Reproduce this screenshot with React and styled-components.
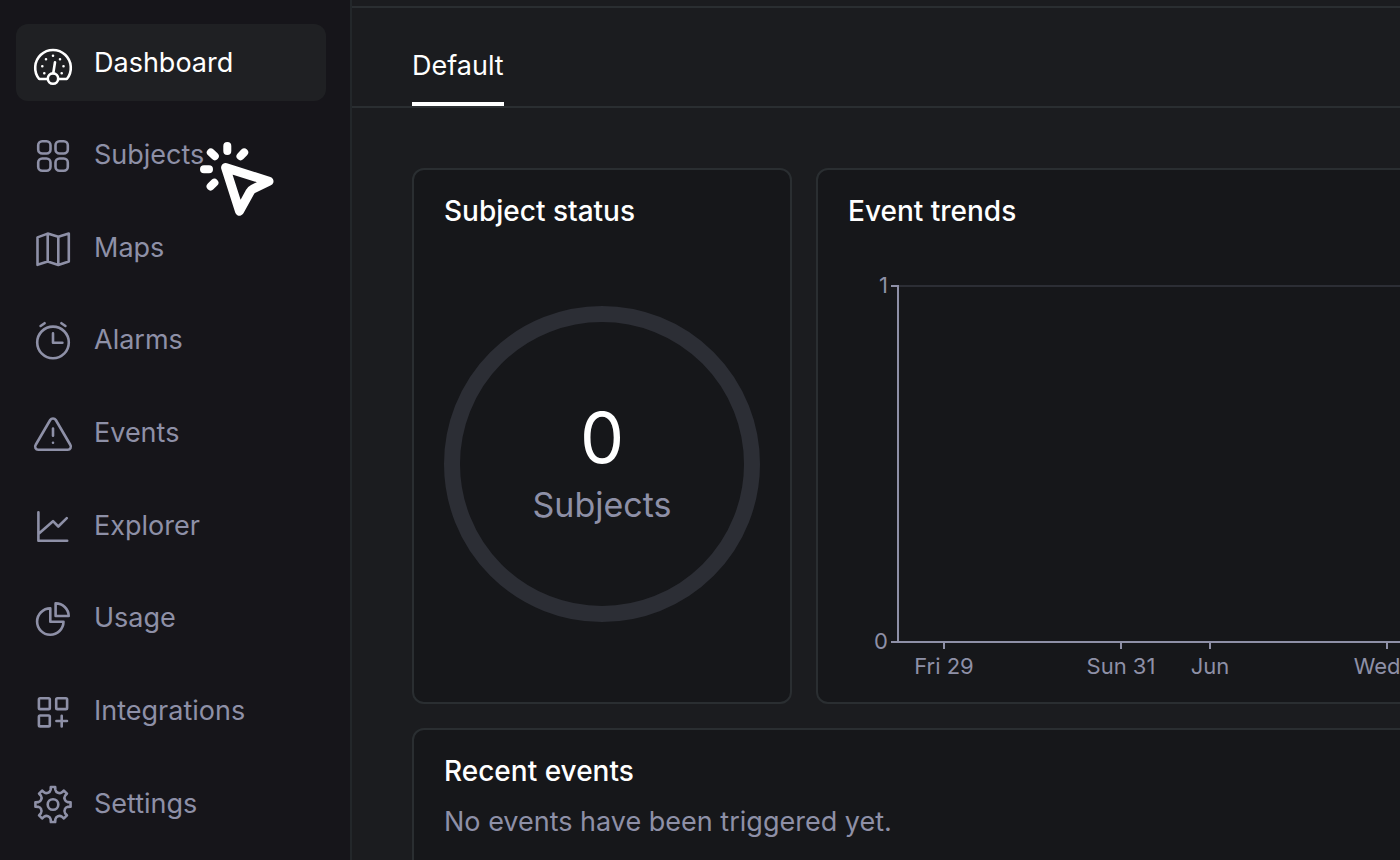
// src/App.jsx
import React, { useState } from 'react';
import styled, { createGlobalStyle } from 'styled-components';

const GlobalStyle = createGlobalStyle`
  * {
    box-sizing: border-box;
  }

  body {
    margin: 0;
    background: #1b1c1f;
    color: #ffffff;
    font-family: Inter, 'Liberation Sans', sans-serif;
    font-size: 27px;
    line-height: 36px;
  }
`;

const Page = styled.div`
  display: flex;
  height: 100vh;
  overflow: hidden;
`;

const Sidebar = styled.aside`
  position: relative;
  flex: none;
  width: 352px;
  background: #16151a;
  border-right: 2px solid #23272a;
`;

const Nav = styled.nav`
  display: flex;
  flex-direction: column;
  justify-content: space-between;
  height: 100%;
  padding: 24px 24px 18px 16px;
`;

const NavLink = styled.a`
  display: flex;
  align-items: center;
  flex: none;
  gap: 21px;
  height: 77px;
  padding: 0 17px;
  border-radius: 12px;
  color: ${(props) => (props.$active ? '#ffffff' : '#8e90a7')};
  background: ${(props) => (props.$active ? '#1f2023' : 'transparent')};
  text-decoration: none;
`;

const Icon = styled.svg`
  flex: none;
  width: 40px;
  height: 40px;
  overflow: visible;
  fill: none;
  stroke: currentColor;
  stroke-width: 2.6;
  stroke-linecap: round;
  stroke-linejoin: round;
`;

const Pointer = styled.svg`
  position: absolute;
  left: 190px;
  top: 130px;
  width: 100px;
  height: 100px;
  fill: none;
  stroke: #ffffff;
  stroke-width: 8;
  stroke-linecap: round;
  stroke-linejoin: round;
  pointer-events: none;
`;

const Main = styled.main`
  flex: 1;
  min-width: 0;
  overflow: hidden;
`;

const TopBar = styled.header`
  height: 8px;
  border-bottom: 2px solid #2a2e31;
`;

const Tabs = styled.div`
  display: flex;
  height: 100px;
  padding: 0 60px;
  border-bottom: 2px solid #2a2e31;
`;

const Tab = styled.button`
  padding: 22px 0 0;
  border: none;
  border-bottom: 4px solid #ffffff;
  background: none;
  color: #ffffff;
  font: inherit;
  cursor: pointer;
`;

const Board = styled.div`
  display: grid;
  grid-template-columns: 380px 1fr;
  gap: 24px;
  width: 150%;
  padding: 60px;
`;

const Card = styled.section`
  grid-column: ${(props) => (props.$wide ? '1 / -1' : 'auto')};
  min-height: ${(props) => (props.$wide ? '240px' : '536px')};
  padding: 23px 30px;
  border: 2px solid #2a2e31;
  border-radius: 12px;
  background: #16171a;
`;

const CardTitle = styled.h2`
  margin: 0;
  font-size: 28px;
  font-weight: 500;
`;

const Empty = styled.p`
  margin: 15px 0 0;
  color: #8e90a7;
`;

const Donut = styled.svg`
  display: block;
  width: 316px;
  height: 316px;
  margin-top: 77px;
  text-anchor: middle;
`;

const DonutValue = styled.text`
  fill: #ffffff;
  font-size: 70px;
`;

const DonutLabel = styled.text`
  fill: #8e90a7;
  font-size: 34px;
`;

const Chart = styled.svg`
  display: block;
  width: 100%;
  height: 412px;
  margin-top: 37px;
  fill: #8e90a7;
  font-size: 22px;
`;

const icons = {
  dashboard: (
    <>
      <path d="M14.5 36H6.2A17.8 17.8 0 1 1 33.8 36H25.5M20.3 30 22 19.2" />
      <circle cx="20" cy="35.6" r="5.2" />
      <path d="M20 12.8h.01M13 16.2h.01M27 16.2h.01M9.3 23.2h.01M30.5 23.2h.01M11.3 30.2h.01M28.7 30.2h.01" />
    </>
  ),
  subjects: (
    <>
      <rect x="5.2" y="6.2" width="12.3" height="12.3" rx="4" />
      <rect x="22.5" y="6.2" width="12.3" height="12.3" rx="4" />
      <rect x="5.2" y="23.5" width="12.3" height="12.3" rx="4" />
      <rect x="22.5" y="23.5" width="12.3" height="12.3" rx="4" />
    </>
  ),
  maps: (
    <path d="M4.5 9.4 14.7 5.6 25.3 8.8 35.8 5.6V33.6L25.3 37 14.7 33.6 4.5 36.8ZM14.7 5.6v28M25.3 8.8V37" />
  ),
  alarms: (
    <>
      <circle cx="20" cy="22.4" r="15.8" />
      <path d="M20 13.4v9.3h9.4M7.6 6l4-2.8M32.4 6l-4-2.8" />
    </>
  ),
  events: (
    <>
      <path d="M5.2 36.8h29.6a3.1 3.1 0 0 0 2.6-4.8L22.8 7a3.3 3.3 0 0 0-5.6 0L2.6 32a3.1 3.1 0 0 0 2.6 4.8Z" />
      <path d="M20 15.6v7.2M20 29.8h.01" />
    </>
  ),
  explorer: <path d="M5.4 6.2v28.6h28.8M5.4 28 20 15.2l5.3 5.3 8.5-8.4" />,
  usage: (
    <>
      <path d="M17.3 10.4A13.2 13.2 0 1 0 30.5 23.8H17.3Z" />
      <path d="M22.6 5.4A12.9 12.9 0 0 1 35.7 18H22.6Z" />
    </>
  ),
  integrations: (
    <>
      <rect x="5.9" y="7.2" width="10.9" height="10.9" rx="1.2" />
      <rect x="23.2" y="7.2" width="10.9" height="10.9" rx="1.2" />
      <rect x="5.9" y="24.5" width="10.9" height="10.9" rx="1.2" />
      <path d="M28.7 24.8v10.6M23.4 30h10.6" />
    </>
  ),
  settings: (
    <>
      <circle cx="20" cy="20.5" r="5.3" />
      <path d={gearPath(20, 20.5)} />
    </>
  )
};

// eight flat teeth with rounded valleys between them
function gearPath(cx, cy) {
  const point = (radius, degrees) => {
    const angle = (degrees * Math.PI) / 180;
    return `${(cx + radius * Math.sin(angle)).toFixed(2)} ${(cy - radius * Math.cos(angle)).toFixed(2)}`;
  };
  let d = '';
  for (let i = 0; i < 8; i += 1) {
    const a = i * 45;
    d += `${i === 0 ? 'M' : 'L'}${point(17.7, a - 7)}L${point(17.7, a + 7)}`;
    d += `L${point(15, a + 9)}Q${point(12.8, a + 13)} ${point(12.8, a + 22.5)}`;
    d += `Q${point(12.8, a + 32)} ${point(15, a + 36)}`;
  }
  return `${d}Z`;
}

const links = [
  { id: 'dashboard', label: 'Dashboard' },
  { id: 'subjects', label: 'Subjects' },
  { id: 'maps', label: 'Maps' },
  { id: 'alarms', label: 'Alarms' },
  { id: 'events', label: 'Events' },
  { id: 'explorer', label: 'Explorer' },
  { id: 'usage', label: 'Usage' },
  { id: 'integrations', label: 'Integrations' },
  { id: 'settings', label: 'Settings' }
];

const ticks = [
  { x: 96, label: 'Fri 29' },
  { x: 273, label: 'Sun 31' },
  { x: 362, label: 'Jun' },
  { x: 539, label: 'Wed 3' }
];

function SubjectStatus() {
  return (
    <Donut viewBox="0 0 316 316">
      <circle cx="158" cy="158" r="150" fill="none" stroke="#2c2e35" strokeWidth="16" />
      <DonutValue x="158" y="157">0</DonutValue>
      <DonutLabel x="158" y="211">Subjects</DonutLabel>
    </Donut>
  );
}

function EventTrends() {
  return (
    <Chart>
      <line x1="50" y1="20" x2="100%" y2="20" stroke="#2c2e35" strokeWidth="2" />
      <path d="M43 20H50V376H43" fill="none" stroke="#8e90a7" strokeWidth="2" />
      <line x1="50" y1="376" x2="100%" y2="376" stroke="#8e90a7" strokeWidth="2" />
      <text x="40" y="27" textAnchor="end">1</text>
      <text x="40" y="383" textAnchor="end">0</text>
      {ticks.map((tick) => (
        <g key={tick.label}>
          <line x1={tick.x} y1="376" x2={tick.x} y2="383" stroke="#8e90a7" strokeWidth="2" />
          <text x={tick.x} y="408" textAnchor="middle">{tick.label}</text>
        </g>
      ))}
    </Chart>
  );
}

function App() {
  const [active, setActive] = useState('dashboard');

  return (
    <Page>
      <GlobalStyle />
      <Sidebar>
        <Nav>
          {links.map((link) => (
            <NavLink
              key={link.id}
              href={`#${link.id}`}
              $active={active === link.id}
              onClick={() => setActive(link.id)}
            >
              <Icon viewBox="0 0 40 40">{icons[link.id]}</Icon>
              {link.label}
            </NavLink>
          ))}
        </Nav>
        <Pointer viewBox="0 0 100 100">
          <path d="M37.3 16v5M20.8 22.4l4 3.8M54.2 22.4l-3.7 3.8M14 39.3h5M24.4 52.7l-3.8 3.7" />
          <path d="M35.6 37.6 79 51.3 63 59Q61 60 60 62L49.5 81.2Z" strokeWidth="9" />
        </Pointer>
      </Sidebar>
      <Main>
        <TopBar />
        <Tabs>
          <Tab type="button">Default</Tab>
        </Tabs>
        <Board>
          <Card>
            <CardTitle>Subject status</CardTitle>
            <SubjectStatus />
          </Card>
          <Card>
            <CardTitle>Event trends</CardTitle>
            <EventTrends />
          </Card>
          <Card $wide>
            <CardTitle>Recent events</CardTitle>
            <Empty>No events have been triggered yet.</Empty>
          </Card>
        </Board>
      </Main>
    </Page>
  );
}

export default App;
